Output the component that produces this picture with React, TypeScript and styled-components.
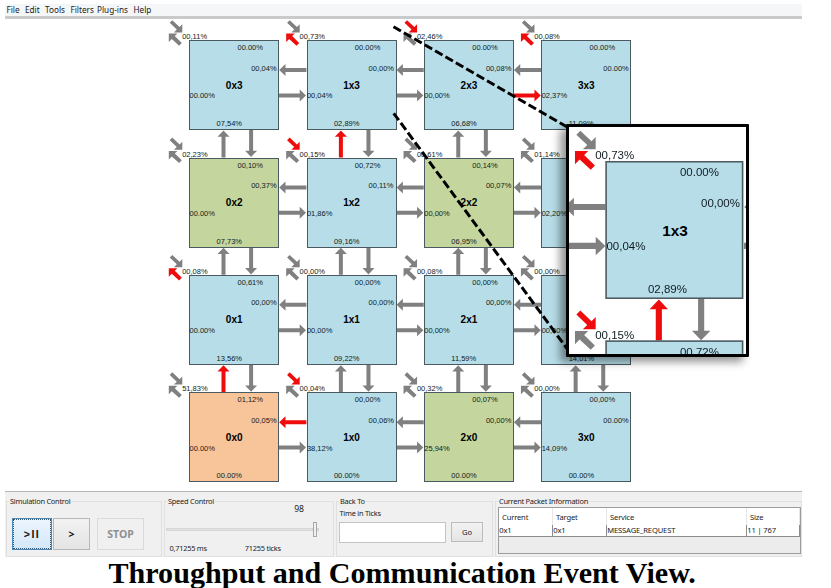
import React from "react";
import styled, { createGlobalStyle, css } from "styled-components";

const PITCH = 117.38;
const BOX = 90;
const GRAY = "#808080";
const RED = "#ee0c0c";

const GlobalStyle = createGlobalStyle`
  * { box-sizing: border-box; }
  html, body { margin: 0; padding: 0; background: #fff; }
  body { width: 831px; height: 588px; overflow: hidden; font-family: "Noto Sans", "Liberation Sans", sans-serif; color: #222; }
`;

type Tone = "blue" | "green" | "orange";
const tones: Record<Tone, string> = { blue: "#b7dde8", green: "#c4d69e", orange: "#f8c499" };

interface RouterData {
  name: string;
  tone?: Tone;
  local: string;
  north: string;
  east: string;
  west: string;
  south: string;
  hotIn?: boolean;
  hotOut?: boolean;
  hotUp?: boolean;
  hotRight?: boolean;
  hotLeft?: boolean;
}

const Z = "00.00%";
const N = "00,00%";

const rows: RouterData[][] = [
  [
    { name: "0x3", local: "00,11%", north: Z, east: "00,04%", west: Z, south: "07,54%" },
    { name: "1x3", local: "00,73%", north: Z, east: N, west: "00,04%", south: "02,89%", hotOut: true },
    { name: "2x3", local: "02,46%", north: Z, east: "00,08%", west: N, south: "06,68%", hotIn: true, hotRight: true },
    { name: "3x3", local: "00,08%", north: Z, east: Z, west: "02,37%", south: "11,09%", hotOut: true },
  ],
  [
    { name: "0x2", tone: "green", local: "02,23%", north: "00,10%", east: "00,37%", west: Z, south: "07,73%" },
    { name: "1x2", local: "00,15%", north: "00,72%", east: "00,11%", west: "01,86%", south: "09,16%", hotIn: true, hotUp: true },
    { name: "2x2", tone: "green", local: "00,61%", north: "00,14%", east: "00,07%", west: N, south: "06,95%" },
    { name: "3x2", local: "01,14%", north: N, east: Z, west: "02,20%", south: "12,40%" },
  ],
  [
    { name: "0x1", local: "00,08%", north: "00,61%", east: N, west: Z, south: "13,56%", hotOut: true },
    { name: "1x1", local: N, north: N, east: N, west: N, south: "09,22%" },
    { name: "2x1", local: "00,08%", north: N, east: N, west: N, south: "11,59%" },
    { name: "3x1", local: N, north: N, east: Z, west: N, south: "14,01%" },
  ],
  [
    { name: "0x0", tone: "orange", local: "51,83%", north: "01,12%", east: "00,05%", west: Z, south: Z, hotUp: true },
    { name: "1x0", local: "00,04%", north: N, east: "00,06%", west: "38,12%", south: Z, hotIn: true, hotLeft: true },
    { name: "2x0", tone: "green", local: "00,32%", north: "00,07%", east: N, west: "25,94%", south: Z },
    { name: "3x0", local: N, north: N, east: Z, west: "14,09%", south: Z },
  ],
];

const Window = styled.div`
  width: 797px;
  height: 557px;
  margin-left: 5px;
  padding-top: 4px;
  display: flex;
  flex-direction: column;
`;

const MenuBar = styled.nav`
  height: 15px;
  flex: none;
  display: flex;
  padding-left: 1.5px;
  background: #f5f6f8;
  border-bottom: 3px solid #c9cacc;
`;

const MenuItem = styled.span<{ $w: number }>`
  width: ${(p) => p.$w}px;
  font-size: 8.2px;
  line-height: 11px;
  white-space: nowrap;
  color: #1a1a1a;
`;

const Canvas = styled.main`
  position: relative;
  flex: 1;
  padding: 21.2px 0 0 184.2px;
`;

const MeshFrame = styled.div`
  position: relative;
  width: max-content;
`;

const Links = styled.svg`
  position: absolute;
  left: 0;
  top: 0;
  overflow: visible;
`;

const Routers = styled.div`
  display: grid;
  grid-template-columns: repeat(4, ${BOX}px);
  grid-auto-rows: ${BOX}px;
  gap: ${PITCH - BOX}px;
`;

const Router = styled.div<{ $tone: Tone }>`
  position: relative;
  display: flex;
  align-items: center;
  justify-content: center;
  background: ${(p) => tones[p.$tone]};
  border: 1px solid #4a5a60;
`;

const RouterName = styled.strong`
  padding-top: 1px;
  font: bold 10px/10px "Liberation Sans", Arial, sans-serif;
  color: #000;
`;

type Port = "local" | "north" | "east" | "west" | "south";
const portPlace: Record<Port, [number, number]> = {
  local: [-8, -4],
  north: [47.3, 7],
  east: [61, 27.4],
  west: [-0.7, 55.2],
  south: [26.4, 83],
};

const Load = styled.span<{ $port: Port }>`
  position: absolute;
  left: ${(p) => portPlace[p.$port][0]}px;
  top: ${(p) => portPlace[p.$port][1] - 4}px;
  font: 7.5px/8px "Liberation Sans", Arial, sans-serif;
  white-space: nowrap;
  color: #101c22;
`;

function Arrow({ x, y, length, angle, hot }: { x: number; y: number; length: number; angle: number; hot?: boolean }) {
  const neck = length - 6.3;
  return (
    <path
      transform={`translate(${x} ${y}) rotate(${angle})`}
      d={`M0 -2H${neck}V-6L${length} 0L${neck} 6V2H0Z`}
      fill={hot ? RED : GRAY}
    />
  );
}

function LocalArrows({ x, y, hotIn, hotOut }: { x: number; y: number; hotIn?: boolean; hotOut?: boolean }) {
  return (
    <g transform={`translate(${x} ${y})`}>
      <path d="M-19.3 -17.2L-16.7 -19.8L-9.4 -12.9L-6.7 -15.7V-7.6H-15.1L-12.2 -10.4Z" fill={hotIn ? RED : GRAY} />
      <path d="M-20.2 -6.5H-11.6L-14.2 -3.9L-7.2 2.9L-9.9 5.7L-17.2 -1L-20.2 2.1Z" fill={hotOut ? RED : GRAY} />
    </g>
  );
}

function Mesh() {
  return (
    <MeshFrame>
      <Links width="442" height="442" aria-hidden="true">
        {rows.map((row, r) =>
          row.map((d, c) => {
            const x = c * PITCH;
            const y = r * PITCH;
            return (
              <g key={d.name}>
                <LocalArrows x={x} y={y} hotIn={d.hotIn} hotOut={d.hotOut} />
                {c > 0 && <Arrow x={x} y={y + 30} length={27.2} angle={180} hot={d.hotLeft} />}
                {c < 3 && <Arrow x={x + BOX} y={y + 55.4} length={27} angle={0} hot={d.hotRight} />}
                {r > 0 && <Arrow x={x + 34.5} y={y} length={27} angle={-90} hot={d.hotUp} />}
                {r < 3 && <Arrow x={x + 62.1} y={y + BOX} length={27} angle={90} />}
              </g>
            );
          }),
        )}
      </Links>
      <Routers>
        {rows.flat().map((d) => (
          <Router key={d.name} $tone={d.tone ?? "blue"}>
            <Load $port="local">{d.local}</Load>
            <Load $port="north">{d.north}</Load>
            <Load $port="east">{d.east}</Load>
            <Load $port="west">{d.west}</Load>
            <Load $port="south">{d.south}</Load>
            <RouterName>{d.name}</RouterName>
          </Router>
        ))}
      </Routers>
    </MeshFrame>
  );
}

const Guides = styled.svg`
  position: absolute;
  left: 0;
  top: 0;
`;

const Magnifier = styled.section`
  position: absolute;
  left: 561px;
  top: 105px;
  width: 183px;
  height: 233px;
  overflow: hidden;
  border: 3px solid #000;
  border-radius: 1px;
  background: #fff;
  box-shadow: -6px 5px 9px rgba(0, 0, 0, 0.42);
`;

const Magnified = styled.div`
  position: absolute;
  left: -143.4px;
  top: 34px;
  transform: scale(1.533);
  transform-origin: 0 0;
`;

const ControlBar = styled.footer`
  height: 66px;
  flex: none;
  display: grid;
  grid-template-columns: 156px 170px 157px 307px;
  column-gap: 2px;
  padding: 9px 0 0 1px;
  background: #f0f0f0;
  border-top: 1.5px solid #b4b7ba;
`;

const Group = styled.section`
  display: flex;
  flex-direction: column;
  border: 1px solid #e0e0e0;
`;

const small = css`
  font-size: 7.4px;
  line-height: 9px;
  letter-spacing: -0.24px;
  white-space: nowrap;
`;

const GroupTitle = styled.h2`
  ${small}
  margin: -5px 0 0 2px;
  padding: 0 1px;
  width: max-content;
  font-weight: 400;
  background: #f0f0f0;
`;

const ButtonRow = styled.div`
  display: flex;
  padding: 12px 0 0 5px;
`;

const SimButton = styled.button<{ $kind: "active" | "normal" | "off" }>`
  width: ${(p) => (p.$kind === "active" ? 40 : p.$kind === "normal" ? 37 : 47)}px;
  height: 32px;
  padding: 0;
  margin-right: ${(p) => (p.$kind === "normal" ? 7 : 1)}px;
  font: bold 10.5px ${(p) => (p.$kind === "active" ? '"Liberation Sans", Arial' : '"Noto Sans"')}, sans-serif;
  letter-spacing: ${(p) => (p.$kind === "active" ? 1.5 : 0)}px;
  color: ${(p) => (p.$kind === "off" ? "#909090" : "#111")};
  border: 1px solid ${(p) => (p.$kind === "active" ? "#4c87b8" : p.$kind === "normal" ? "#b8b8b8" : "#dadada")};
  background: ${(p) =>
    p.$kind === "active" ? "linear-gradient(#ecf5fd, #d3e8fa)" : p.$kind === "normal" ? "linear-gradient(#f2f2f2, #e4e4e4)" : "#f0f0f0"};
  ${(p) => p.$kind === "active" && "outline: 1px dotted #33546f; outline-offset: -2px;"}
`;

const SpeedValue = styled.output`
  font-size: 8.6px;
  line-height: 10px;
  margin: -2px 29px 0 0;
  align-self: flex-end;
`;

const Slider = styled.div`
  display: flex;
  align-items: center;
  height: 16px;
  margin: 7px 0 0 1px;
`;

const Track = styled.div<{ $w: number }>`
  width: ${(p) => p.$w}px;
  height: 3px;
  background: #e4e4e4;
  border: 1px solid #d5d5d5;
`;

const Thumb = styled.div`
  width: 4px;
  height: 15px;
  border: 1px solid #a8a8a8;
  background: #f0f0f0;
`;

const SpeedLabels = styled.div`
  ${small}
  display: flex;
  gap: 38px;
  padding: 7px 0 0 4.5px;
`;

const FieldLabel = styled.label`
  ${small}
  padding-left: 2.5px;
  margin-top: 3px;
`;

const FieldRow = styled.div`
  display: flex;
  align-items: flex-start;
  gap: 5px;
  padding: 4px 0 0 2px;
`;

const TickInput = styled.input`
  width: 107px;
  height: 21px;
  border: 1px solid #c2c4c8;
  background: #fff;
`;

const GoButton = styled.button`
  width: 32px;
  height: 20px;
  padding: 0;
  border: 1px solid #bcbcbc;
  background: linear-gradient(#f2f2f2, #e5e5e5);
  font: 7.6px "Noto Sans", sans-serif;
  color: #222;
`;

const PacketTable = styled.div`
  margin: 1px 0 0 2px;
  width: 303px;
  height: 47px;
  border: 1px solid #9a9ca0;
  background: #ececec;
`;

const PacketRow = styled.div<{ $head?: boolean }>`
  display: grid;
  grid-template-columns: 54px 54px 140px 1fr;
  height: ${(p) => (p.$head ? 17 : 12)}px;
  background: #fff;
  ${(p) => !p.$head && "border-bottom: 1px solid #8c8c8c;"}
`;

const PacketCell = styled.span<{ $head?: boolean }>`
  ${small}
  font-size: 7.6px;
  letter-spacing: -0.16px;
  line-height: ${(p) => (p.$head ? 18 : 11)}px;
  padding-left: ${(p) => (p.$head ? 3 : 0.3)}px;
  border-right: 1px solid ${(p) => (p.$head ? "#e6e6e6" : "#8c8c8c")};
`;

const Caption = styled.h1`
  margin: 0 0 0 108.5px;
  font: bold 30.1px/32px "Liberation Serif", "Times New Roman", serif;
  color: #000;
  white-space: nowrap;
`;

const menu: [string, number][] = [["File", 18.5], ["Edit", 20], ["Tools", 25.5], ["Filters", 26.5], ["Plug-ins", 36.5], ["Help", 24]];

export default function App() {
  return (
    <>
      <GlobalStyle />
      <Window>
        <MenuBar>
          {menu.map(([label, w]) => (
            <MenuItem key={label} $w={w}>{label}</MenuItem>
          ))}
        </MenuBar>
        <Canvas>
          <Mesh />
          <Guides width="797" height="472" aria-hidden="true">
            <g stroke="#000" strokeWidth="3" strokeDasharray="8.6 3.4">
              <path d="M388.5 7.7L563 108.5" />
              <path d="M388.7 94.3L563 331" />
            </g>
          </Guides>
          <Magnifier>
            <Magnified>
              <Mesh />
            </Magnified>
          </Magnifier>
        </Canvas>
        <ControlBar>
          <Group>
            <GroupTitle>Simulation Control</GroupTitle>
            <ButtonRow>
              <SimButton $kind="active">&gt;II</SimButton>
              <SimButton $kind="normal">&gt;</SimButton>
              <SimButton $kind="off">STOP</SimButton>
            </ButtonRow>
          </Group>
          <Group>
            <GroupTitle>Speed Control</GroupTitle>
            <SpeedValue>98</SpeedValue>
            <Slider>
              <Track $w={147} />
              <Thumb />
              <Track $w={2} />
            </Slider>
            <SpeedLabels>
              <span>0,71255 ms</span>
              <span>71255 ticks</span>
            </SpeedLabels>
          </Group>
          <Group>
            <GroupTitle>Back To</GroupTitle>
            <FieldLabel htmlFor="ticks">Time in Ticks</FieldLabel>
            <FieldRow>
              <TickInput id="ticks" />
              <GoButton>Go</GoButton>
            </FieldRow>
          </Group>
          <Group>
            <GroupTitle>Current Packet Information</GroupTitle>
            <PacketTable>
              <PacketRow $head>
                {["Current", "Target", "Service", "Size"].map((t) => (
                  <PacketCell $head key={t}>{t}</PacketCell>
                ))}
              </PacketRow>
              <PacketRow>
                {["0x1", "0x1", "MESSAGE_REQUEST", "11 | 767"].map((t, i) => (
                  <PacketCell key={i}>{t}</PacketCell>
                ))}
              </PacketRow>
            </PacketTable>
          </Group>
        </ControlBar>
      </Window>
      <Caption>Throughput and Communication Event View.</Caption>
    </>
  );
}
